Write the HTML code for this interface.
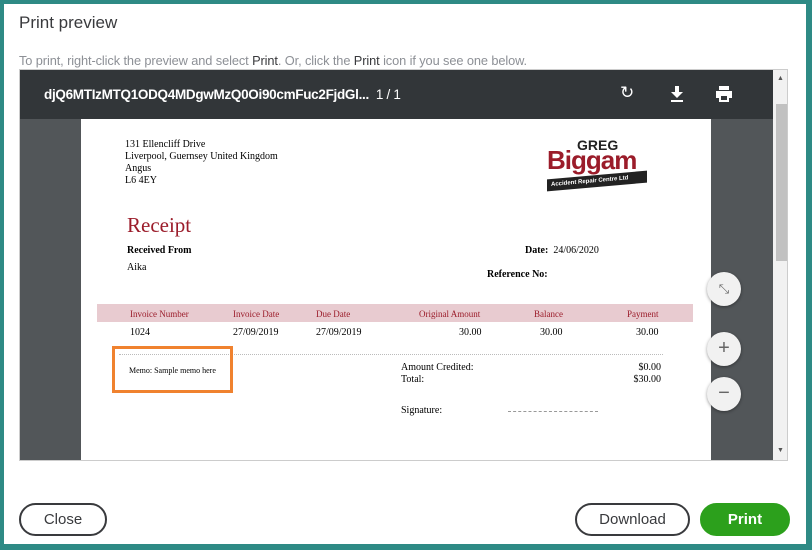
<!DOCTYPE html>
<html><head><style>
*{margin:0;padding:0;box-sizing:border-box}
body{width:812px;height:550px;background:#2e8a85;font-family:"Liberation Sans",sans-serif;position:relative;overflow:hidden}
.dlg{position:absolute;left:4px;top:4px;width:802px;height:540px;background:#fff}
.a{position:absolute}
.ser{font-family:"Liberation Serif",serif}
.btn{position:absolute;height:33px;border-radius:17px;border:2px solid #393a3d;font-size:15px;color:#393a3d;text-align:center;line-height:29px}
.th{color:#9b1c2a;font-size:9px}
.td{font-size:10px;color:#000}
.circ{position:absolute;width:34px;height:34px;border-radius:50%;background:#f1f1f1;box-shadow:0 1px 3px rgba(0,0,0,.4);color:#666;text-align:center;font-size:20px;line-height:33px}
</style></head><body>
<div class="dlg"></div>
<div class="a" style="left:19px;top:13px;font-size:17px;color:#393a3d">Print preview</div>
<div class="a" style="left:19px;top:53px;font-size:12.8px;color:#8d9096;letter-spacing:-0.1px">To print, right-click the preview and select <span style="color:#393a3d">Print</span>. Or, click the <span style="color:#393a3d">Print</span> icon if you see one below.</div>
<div class="a" style="left:19px;top:69px;width:769px;height:392px;border:1px solid #ccc;background:#525659;overflow:hidden">
 <div class="a" style="left:0;top:0;width:753px;height:49px;background:#323639"></div>
 <div class="a" style="left:24px;top:17px;color:#fff;font-size:13.5px;font-weight:bold;letter-spacing:-0.3px">djQ6MTIzMTQ1ODQ4MDgwMzQ0Oi90cmFuc2FjdGl...&nbsp; <span style="font-weight:normal">1 / 1</span></div>
 <div class="a" style="left:600px;top:13px;color:#fff;font-size:17px">&#x21BB;</div>
 <svg class="a" style="left:650px;top:16px" width="14" height="16"><path d="M5 0h4v6h4l-6 6-6-6h4z M1 14h12v2H1z" fill="#fff"/></svg>
 <svg class="a" style="left:695px;top:16px" width="18" height="16"><path d="M4 0h10v4H4z M1 5h16v7h-3v4H4v-4H1z" fill="#fff"/><rect x="6" y="10" width="6" height="4" fill="#323639"/></svg>
 <div class="a" style="left:753px;top:0;width:16px;height:392px;background:#f1f1f1"></div>
 <div class="a" style="left:756px;top:34px;width:11px;height:157px;background:#c1c1c1"></div>
 <div class="a" style="left:757px;top:5px;font-size:7px;color:#555">&#9650;</div>
 <div class="a" style="left:757px;top:377px;font-size:7px;color:#555">&#9660;</div>
 <div class="a ser" style="left:61px;top:49px;width:630px;height:343px;background:#fff">
  <div class="a td" style="left:44px;top:20px;line-height:12px">131 Ellencliff Drive<br>Liverpool, Guernsey United Kingdom<br>Angus<br>L6 4EY</div>
  <div class="a" style="left:466px;top:18px;width:110px;height:56px">
   <div class="a" style="left:30px;top:0;font:bold 14px 'Liberation Sans';color:#222">GREG</div>
   <div class="a" style="left:0;top:8px;font:bold 26px 'Liberation Sans';color:#9b1c2a;letter-spacing:-1px">Biggam</div>
   <div class="a" style="left:0;top:38px;width:100px;height:12px;background:#222;transform:skewY(-5deg);color:#fff;font:bold 6px 'Liberation Sans';line-height:12px;padding-left:4px">Accident Repair Centre Ltd</div>
  </div>
  <div class="a" style="left:46px;top:94px;font-size:21px;color:#9b1c2a">Receipt</div>
  <div class="a" style="left:46px;top:126px;font-size:10px;font-weight:bold">Received From</div>
  <div class="a td" style="left:46px;top:143px">Aika</div>
  <div class="a" style="left:444px;top:126px;font-size:10px"><b>Date:</b> &nbsp;24/06/2020</div>
  <div class="a" style="left:406px;top:150px;font-size:10px;font-weight:bold">Reference No:</div>
  <div class="a" style="left:16px;top:185px;width:596px;height:18px;background:#e8cbd0"></div>
  <div class="a th" style="left:49px;top:190px">Invoice Number</div>
  <div class="a th" style="left:152px;top:190px">Invoice Date</div>
  <div class="a th" style="left:235px;top:190px">Due Date</div>
  <div class="a th" style="left:338px;top:190px">Original Amount</div>
  <div class="a th" style="left:453px;top:190px">Balance</div>
  <div class="a th" style="left:546px;top:190px">Payment</div>
  <div class="a td" style="left:49px;top:208px">1024</div>
  <div class="a td" style="left:152px;top:208px">27/09/2019</div>
  <div class="a td" style="left:235px;top:208px">27/09/2019</div>
  <div class="a td" style="left:378px;top:208px">30.00</div>
  <div class="a td" style="left:459px;top:208px">30.00</div>
  <div class="a td" style="left:555px;top:208px">30.00</div>
  <div class="a" style="left:38px;top:235px;width:544px;border-top:1px dotted #bbb"></div>
  <div class="a" style="left:48px;top:247px;font-size:8px">Memo: Sample memo here</div>
  <div class="a td" style="left:320px;top:243px;line-height:12px">Amount Credited:<br>Total:</div>
  <div class="a td" style="left:540px;top:243px;line-height:12px;text-align:right;width:40px">$0.00<br>$30.00</div>
  <div class="a td" style="left:320px;top:286px">Signature:</div>
  <div class="a" style="left:427px;top:292px;width:90px;border-top:1px dashed #999"></div>
 </div>
 <div class="circ" style="left:687px;top:202px;font-size:13px">&#x2921;</div>
 <div class="circ" style="left:687px;top:262px">+</div>
 <div class="circ" style="left:687px;top:307px">&minus;</div>
</div>
<div class="a" style="left:112px;top:346px;width:121px;height:47px;border:3px solid #f0822f"></div>
<div class="btn" style="left:19px;top:503px;width:88px">Close</div>
<div class="btn" style="left:575px;top:503px;width:115px">Download</div>
<div class="btn" style="left:700px;top:503px;width:90px;background:#2ca01c;border-color:#2ca01c;color:#fff;font-weight:bold">Print</div>
</body></html>
